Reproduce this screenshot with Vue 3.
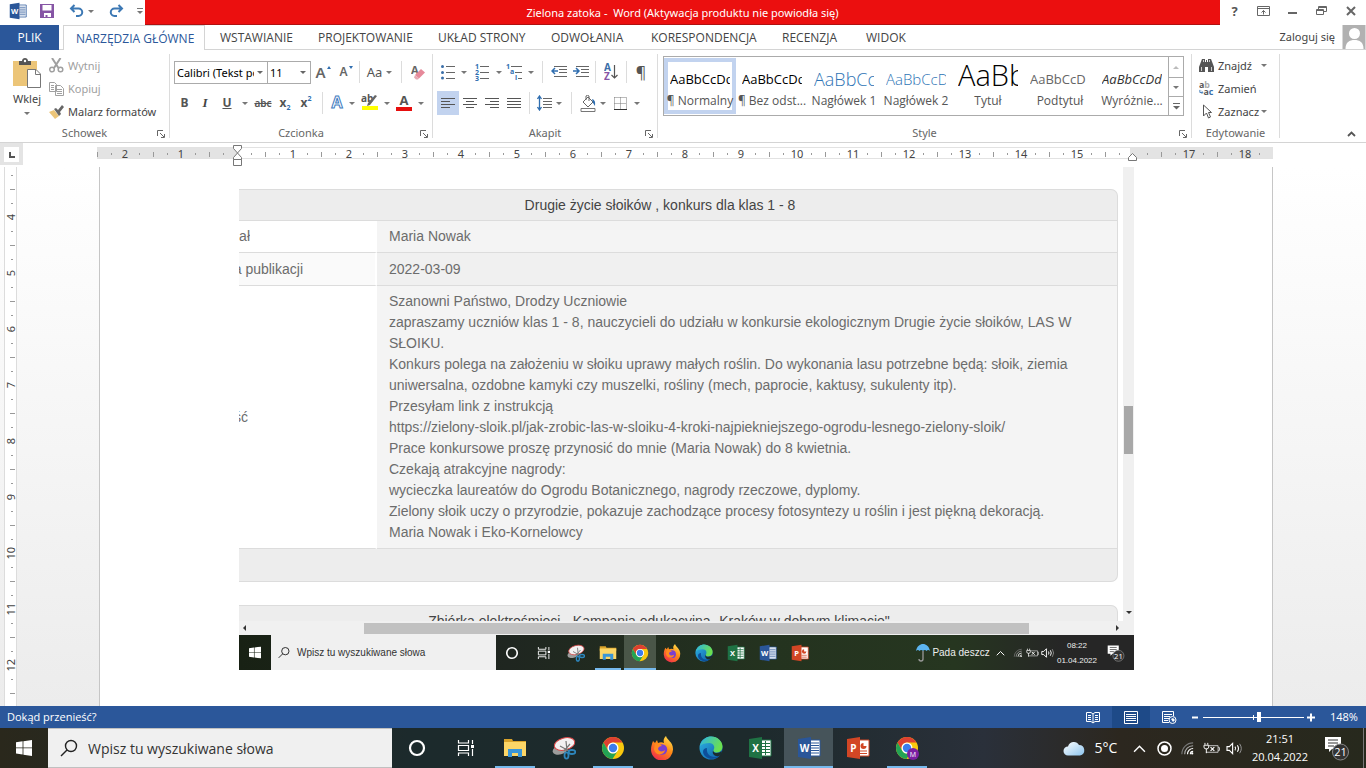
<script setup>
import { ref } from 'vue'

const tabs = [
  { name: 'WSTAWIANIE', cls: 't98' },
  { name: 'PROJEKTOWANIE', cls: 't120' },
  { name: 'UKŁAD STRONY', cls: 't113' },
  { name: 'ODWOŁANIA', cls: 't100' },
  { name: 'KORESPONDENCJA', cls: 't131' },
  { name: 'RECENZJA', cls: 't84' },
  { name: 'WIDOK', cls: 't67' },
]

const styles = [
  { preview: 'AaBbCcDd', label: '¶ Normalny', cls: 'p-normal', on: true },
  { preview: 'AaBbCcDd', label: '¶ Bez odst...', cls: 'p-normal' },
  { preview: 'AaBbCc', label: 'Nagłówek 1', cls: 'p-h1' },
  { preview: 'AaBbCcD', label: 'Nagłówek 2', cls: 'p-h2' },
  { preview: 'AaBb', label: 'Tytuł', cls: 'p-title' },
  { preview: 'AaBbCcD', label: 'Podtytuł', cls: 'p-sub' },
  { preview: 'AaBbCcDd', label: 'Wyróżnie...', cls: 'p-em' },
]

const ruler = [2, 1, '', 1, 2, 3, 4, 5, 6, 7, 8, 9, 10, 11, 12, 13, 14, 15, '', 17, 18]
const sideRuler = ['', 4, 5, 6, 7, 8, 9, 10, 11, 12, '']

const body = [
  'Szanowni Państwo, Drodzy Uczniowie',
  'zapraszamy uczniów klas 1 - 8, nauczycieli do udziału w konkursie ekologicznym Drugie życie słoików, LAS W',
  'SŁOIKU.',
  'Konkurs polega na założeniu w słoiku uprawy małych roślin. Do wykonania lasu potrzebne będą: słoik, ziemia',
  'uniwersalna, ozdobne kamyki czy muszelki, rośliny (mech, paprocie, kaktusy, sukulenty itp).',
  'Przesyłam link z instrukcją',
  'https://zielony-sloik.pl/jak-zrobic-las-w-sloiku-4-kroki-najpiekniejszego-ogrodu-lesnego-zielony-sloik/',
  'Prace konkursowe proszę przynosić do mnie (Maria Nowak) do 8 kwietnia.',
  'Czekają atrakcyjne nagrody:',
  'wycieczka laureatów do Ogrodu Botanicznego, nagrody rzeczowe, dyplomy.',
  'Zielony słoik uczy o przyrodzie, pokazuje zachodzące procesy fotosyntezy u roślin i jest piękną dekoracją.',
  'Maria Nowak i Eko-Kornelowcy',
]

const apps = [
  { icon: 'cortana', name: 'Cortana' },
  { icon: 'taskview', name: 'Widok zadań' },
  { icon: 'explorer', name: 'Eksplorator plików', run: true },
  { icon: 'snip', name: 'Narzędzie Wycinanie' },
  { icon: 'chrome', name: 'Chrome', run: true },
  { icon: 'firefox', name: 'Firefox' },
  { icon: 'edge', name: 'Edge' },
  { icon: 'excel', name: 'Excel' },
  { icon: 'word', name: 'Word', run: true, active: true },
  { icon: 'ppt', name: 'PowerPoint' },
  { icon: 'chromem', name: 'Chrome M', run: true },
]
const innerApps = [
  { icon: 'cortana' },
  { icon: 'taskview' },
  { icon: 'snip' },
  { icon: 'explorer', run: true },
  { icon: 'chrome', run: true, active: true },
  { icon: 'firefox' },
  { icon: 'edge' },
  { icon: 'excel' },
  { icon: 'word' },
  { icon: 'ppt' },
]

const zoom = ref(56)
const query = ref('')
</script>

<template>
  <div class="screen">
    <svg class="defs" aria-hidden="true">
      <defs>
        <linearGradient id="gEdge" x1="0" y1="0" x2="1" y2="1">
          <stop offset="0" stop-color="#2fb6e6" /><stop offset="1" stop-color="#0c59a4" />
        </linearGradient>
        <linearGradient id="gEdge2" x1="0" y1="0" x2="1" y2="0.4">
          <stop offset="0" stop-color="#2cb4e8" /><stop offset="1" stop-color="#6be04f" />
        </linearGradient>
        <linearGradient id="gFox" x1="0.8" y1="0" x2="0.2" y2="1">
          <stop offset="0" stop-color="#ffe14d" /><stop offset="0.45" stop-color="#ff8a16" /><stop offset="1" stop-color="#f0264f" />
        </linearGradient>
        <linearGradient id="gCloud" x1="0" y1="0" x2="1" y2="1">
          <stop offset="0" stop-color="#ffffff" /><stop offset="1" stop-color="#8cc4ee" />
        </linearGradient>
      </defs>
      <symbol id="cortana" viewBox="0 0 24 24"><circle cx="12" cy="12" r="7" fill="none" stroke="#fff" stroke-width="2.2" /></symbol>
      <symbol id="taskview" viewBox="0 0 24 24">
        <path d="M4.500 4v3h10V4M4.500 20v-3h10v3M4.500 9.500h10v5h-10zM18.500 4v4M18.500 13v7" fill="none" stroke="#fff" stroke-width="1.200" />
        <path d="M17 9h3v3h-3z" fill="#fff" />
      </symbol>
      <symbol id="explorer" viewBox="0 0 24 24">
        <path d="M1 3h8l1 2h13v4H1z" fill="#d9a32b" /><path d="M1 6h22v14H1z" fill="#fcd667" />
        <path d="M5 13h14v8h-4v-4H9v4H5z" fill="#3a96d8" />
      </symbol>
      <symbol id="snip" viewBox="0 0 24 24">
        <ellipse cx="8" cy="14" rx="7.500" ry="4.500" transform="rotate(-15 8 14)" fill="#9c9c9c" />
        <ellipse cx="12.500" cy="8" rx="10.500" ry="6" transform="rotate(-15 12.500 8)" fill="#f3f1f2" stroke="#d84848" />
        <path d="M14 5l1 10M8 10l9 5M18 8l-6 7" stroke="#777" stroke-width="1.200" />
        <g fill="none" stroke="#2d86bd" stroke-width="1.800"><ellipse cx="14.500" cy="19.500" rx="2" ry="3.200" /><ellipse cx="20" cy="16" rx="3.400" ry="2" /></g>
      </symbol>
      <symbol id="chrome" viewBox="0 0 24 24">
        <circle cx="12" cy="12" r="11" fill="#f9c80e" />
        <path d="M2.500 6.500A11 11 0 0 1 21.500 6.500H12a5.500 5.500 0 0 0-4.800 8.200z" fill="#dd4031" />
        <path d="M2.500 6.500A11 11 0 0 0 11.500 23L16.800 14.700a5.500 5.500 0 0 1-9.600 0z" fill="#23a355" />
        <circle cx="12" cy="12" r="5.500" fill="#fff" /><circle cx="12" cy="12" r="4.200" fill="#3b7ded" />
      </symbol>
      <symbol id="firefox" viewBox="0 0 24 24">
        <path d="M3 5l2 2 2-3 1 3c2-1 4-1 6 0-1-3 0-5 2-7 1 4 7 6 7 13a11 11 0 0 1-22 1C1 10 2 8 3 5z" fill="url(#gFox)" />
        <circle cx="12" cy="13.500" r="5.200" fill="#7a3fd0" />
        <path d="M5 8c3-1 5 0 7 2-2 0-4 1-4 3 1 3 5 3 7 1-1 6-10 6-11-1z" fill="#ff8a20" />
      </symbol>
      <symbol id="edge" viewBox="0 0 24 24">
        <circle cx="12" cy="12" r="11.500" fill="url(#gEdge)" />
        <path d="M1 10C3 3 8 .5 12 .5c7 0 11.500 5 11.500 10 0 4-3 6-6 6-2 0-4-1-3-2.500 2-3 0-7-4-7-4 0-8 1-9.500 3z" fill="url(#gEdge2)" />
        <path d="M8 12c-1 6 4 11 12 8-5 5-15 3-16-4 0-3 2-4 4-4z" fill="#0d4f9a" />
        <path d="M14.500 13.500c-1 2 1 3.500 3 3.500 2.500 0 4-1 5-2l.5 3-3 2c-4 1-8-2-5.500-6.500z" fill="#1b2c2f" />
      </symbol>
      <symbol id="excel" viewBox="0 0 24 24">
        <path d="M12 4h11v16H12z" fill="#fff" stroke="#1f7244" /><path d="M13 7.500h9M13 10.500h9M13 13.500h9M13 16.500h9M17.500 5v14" stroke="#1f7244" />
        <path d="M1 3l13-2v22L1 21z" fill="#1f7244" /><text x="7.500" y="16" class="off">X</text>
      </symbol>
      <symbol id="word" viewBox="0 0 24 24">
        <path d="M12 4h11v16H12z" fill="#fff" stroke="#2a5699" /><path d="M14 7h8M14 9.500h8M14 12h8M14 14.500h8M14 17h8" stroke="#2a5699" />
        <path d="M1 3l13-2v22L1 21z" fill="#2a5699" /><text x="7.500" y="16" class="off">W</text>
      </symbol>
      <symbol id="ppt" viewBox="0 0 24 24">
        <path d="M12 4h11v16H12z" fill="#fff" stroke="#d24625" /><path d="M14 15h7M14 17.500h7" stroke="#d24625" /><circle cx="17.500" cy="10" r="3" fill="#d24625" /><path d="M17.500 10V6h4v4z" fill="#fff" />
        <path d="M1 3l13-2v22L1 21z" fill="#d24625" /><text x="7.500" y="16" class="off">P</text>
      </symbol>
      <symbol id="chromem" viewBox="0 0 24 24">
        <use href="#chrome" /><circle cx="18" cy="18" r="6" fill="#7b1fa2" /><text x="18" y="20.500" class="badge">M</text>
      </symbol>
      <symbol id="start" viewBox="0 0 16 16"><path d="M0 2.300l6.600-1v6.200H0zM7.400 1.200L16 0v7.500H7.400zM0 8.300h6.600v6.300l-6.600-1zM7.400 8.300H16V16l-8.600-1.200z" fill="#fff" /></symbol>
      <symbol id="search" viewBox="0 0 18 18"><circle cx="11" cy="7" r="5.500" fill="none" stroke="#222" stroke-width="1.400" /><path d="M7 11l-6 6" stroke="#222" stroke-width="1.400" /></symbol>
      <symbol id="wifi" viewBox="0 0 16 16">
        <g fill="none" stroke-width="1.200"><path d="M2 14A12 12 0 0 1 14 2" stroke="#777" /><path d="M5 14a9 9 0 0 1 9-9" stroke="#aaa" /><path d="M8 14a6 6 0 0 1 6-6" stroke="#fff" /><path d="M11 14a3 3 0 0 1 3-3" stroke="#fff" /></g><circle cx="13" cy="13.200" r="1.200" fill="#fff" />
      </symbol>
      <symbol id="batt" viewBox="0 0 18 16">
        <path d="M6 5h10v7H3M16 7h1.500v3H16" fill="none" stroke="#ccc" /><path d="M2 2v2M5 2v2M1 4.500h5v2a2.500 2 0 0 1-5 0zM3.500 8v5" fill="none" stroke="#fff" /><path d="M8 6.500l4 4M12 6.500l-4 4" stroke="#fff" stroke-width="1.300" />
      </symbol>
      <symbol id="vol" viewBox="0 0 18 16">
        <path d="M1 6h2.500L7 2.500v11L3.500 10H1z" fill="none" stroke="#fff" stroke-width="1.200" /><path d="M9.500 6q1.500 2 0 4M12 4.500q2.500 3.500 0 7" fill="none" stroke="#fff" stroke-width="1.200" /><path d="M14.500 3q3.500 5 0 10" fill="none" stroke="#999" />
      </symbol>
      <symbol id="up" viewBox="0 0 12 12"><path d="M1 9l5-5 5 5" fill="none" stroke="#fff" stroke-width="1.300" /></symbol>
      <symbol id="note" viewBox="0 0 26 26">
        <path d="M1 2h16v12H8l-3 3v-3H1z" fill="#fff" /><path d="M4 5h10M4 8h10M4 11h6" stroke="#333" /><circle cx="16.500" cy="17" r="8" fill="#333" stroke="#888" /><text x="16.500" y="21" class="num">21</text>
      </symbol>
      <symbol id="launch" viewBox="0 0 8 8"><path d="M.5 6V.5H6M3 3l4 4M7.500 4v3.500H4" fill="none" stroke="#666" /></symbol>
    </svg>

    <header class="titlebar">
      <div class="quick">
        <svg class="i18"><use href="#word" /></svg>
        <button aria-label="Zapisz"><svg width="14" height="14" viewBox="0 0 14 14"><path d="M0 0h14v14H0z" fill="#8655a5" /><path d="M2.500 1h9v5.500h-9zM4 9h7v4H7.500v-2h-2v2H4z" fill="#fff" /></svg></button>
        <button aria-label="Cofnij"><svg width="15" height="14" viewBox="0 0 15 14"><path d="M5.500 1L2 4.500 5.500 8M2 4.500h7.500a3.700 3.700 0 0 1 0 7.500H7" fill="none" stroke="#3c78b4" stroke-width="2" /></svg></button>
        <i class="caret"></i>
        <button aria-label="Ponów"><svg width="15" height="14" viewBox="0 0 15 14"><path d="M9.500 1L13 4.500 9.500 8M13 4.500H5.500a3.700 3.700 0 0 0 0 7.500H8" fill="none" stroke="#3c78b4" stroke-width="2" /></svg></button>
        <button aria-label="Dostosuj"><svg width="6" height="7" viewBox="0 0 6 7"><path d="M0 .5h6" stroke="#777" /><path d="M0 3h6L3 6z" fill="#777" /></svg></button>
      </div>
      <h1 class="caption">Zielona zatoka -&nbsp; Word (Aktywacja produktu nie powiodła się)</h1>
      <div class="wincontrols">
        <button aria-label="Pomoc" class="help">?</button>
        <button aria-label="Opcje wstążki"><svg width="13" height="10" viewBox="0 0 13 10"><path d="M.5.5h12v9H.5zM.5 2.500h12M6.500 8.500v-4M4.500 6.500l2-2 2 2" fill="none" stroke="#666" /></svg></button>
        <button aria-label="Minimalizuj"><svg width="10" height="10" viewBox="0 0 10 10"><path d="M0 7h9" stroke="#666" stroke-width="2" /></svg></button>
        <button aria-label="Przywróć"><svg width="11" height="10" viewBox="0 0 11 10"><path d="M.5 3.500h7v5h-7zM.5 4.500h7M2.500 3V.5h8v5H8M2.500 1.500h8" fill="none" stroke="#666" /></svg></button>
        <button aria-label="Zamknij"><svg width="10" height="10" viewBox="0 0 10 10"><path d="M1 1l8 8M9 1L1 9" stroke="#666" stroke-width="2" /></svg></button>
      </div>
    </header>

    <nav class="tabs">
      <button class="file">PLIK</button>
      <button class="active">NARZĘDZIA GŁÓWNE</button>
      <button v-for="t in tabs" :key="t.name" :class="t.cls">{{ t.name }}</button>
      <a href="#" class="login">Zaloguj się</a>
      <svg class="avatar" width="24" height="24" viewBox="0 0 23 24"><path d="M0 0h23v24H0z" fill="#b1b1b1" /><circle cx="12" cy="8.500" r="5.500" fill="#fff" /><path d="M3 24c0-7 4-9 9-9s9 2 9 9z" fill="#fff" /></svg>
    </nav>

    <section class="ribbon">
      <div class="group g-clip">
        <div class="gbody clip">
          <button class="paste">
            <svg width="28" height="30" viewBox="0 0 28 30"><path d="M0 3h24v25H0z" fill="#ecc578" /><path d="M6 7V3h3c0-4 6-4 6 0h3v4z" fill="#555" /><circle cx="12" cy="3" r="1.200" fill="#fff" /><path d="M14.500 11.500H23l4.500 4.500v13.500h-13z" fill="#fff" stroke="#777" /><path d="M22.500 12v4.500H27" fill="none" stroke="#777" /></svg>
            <span>Wklej</span><i class="caret"></i>
          </button>
          <div class="stack">
            <button class="dim"><svg width="15" height="15" viewBox="0 0 15 15"><g fill="none" stroke="#a0a0a0" stroke-width="1.500"><circle cx="3" cy="11.500" r="2.300" /><circle cx="11.500" cy="11.500" r="2.300" /></g><path d="M3 0l6.500 10M11.500 0L5 10" stroke="#a0a0a0" stroke-width="2" /></svg>Wytnij</button>
            <button class="dim"><svg width="15" height="15" viewBox="0 0 15 15"><path d="M.5 1.500h5l2 2v7h-7zM6.500 4.500h5l3 3v7h-8z" fill="#fff" stroke="#a0a0a0" /><path d="M2 4.500h3M2 6.500h3M2 8.500h3M8 8.500h5M8 10.500h5M8 12.500h5" stroke="#a0a0a0" /></svg>Kopiuj</button>
            <button><svg width="15" height="14" viewBox="0 0 15 14"><path d="M0 7l5-2 5 6-4 3z" fill="#ecc578" /><path d="M5 4l2-1 2 2 4-5 2 2-4 5 1 2-2 2z" fill="#666" /></svg>Malarz formatów</button>
          </div>
        </div>
        <footer>Schowek<svg class="launch"><use href="#launch" /></svg></footer>
      </div>

      <div class="group g-font">
        <div class="gbody rows">
          <div class="row font1">
            <label class="combo"><select aria-label="Czcionka"><option>Calibri (Tekst podstawowy)</option></select></label>
            <label class="combo second"><select aria-label="Rozmiar"><option>11</option></select></label>
            <button class="big">A<sup class="tri up"></sup></button>
            <button class="mid">A<sup class="tri down"></sup></button>
            <i class="vsep"></i>
            <button class="aa">Aa<i class="caret"></i></button>
            <i class="vsep"></i>
            <button aria-label="Wyczyść"><svg width="15" height="16" viewBox="0 0 15 16"><text x="0" y="10" class="t11">A</text><path d="M4 11l6-6 4 3.500-6 6z" fill="#e6899a" /><path d="M4 11l4 3.500-1 1H5l-2-2z" fill="#e6a9b4" /></svg></button>
          </div>
          <div class="row font2">
            <button class="b">B</button><button class="it">I</button><button class="un">U</button><i class="caret"></i>
            <button class="st">abc</button>
            <button class="xx">x<sub>2</sub></button><button class="xx">x<sup>2</sup></button>
            <i class="vsep"></i>
            <button aria-label="Efekty"><svg width="16" height="18" viewBox="0 0 16 18"><text x="8" y="14" class="glow">A</text></svg></button><i class="caret"></i>
            <button aria-label="Wyróżnienie"><svg width="18" height="18" viewBox="0 0 18 18"><text x="0" y="8" class="t9">ab</text><path d="M14 1l2 1-7 9-3 1 1-3z" fill="#666" /><path d="M1 12h16v4H1z" fill="#ff0" /></svg></button><i class="caret"></i>
            <button aria-label="Kolor"><svg width="16" height="18" viewBox="0 0 16 18"><text x="8" y="11" class="t13">A</text><path d="M0 13h16v4H0z" fill="#e60e0e" /></svg></button><i class="caret"></i>
          </div>
        </div>
        <footer>Czcionka<svg class="launch"><use href="#launch" /></svg></footer>
      </div>

      <div class="group g-para">
        <div class="gbody rows">
          <div class="row para1">
            <button aria-label="Punktory"><svg width="14" height="16" viewBox="0 0 14 16"><path d="M5 2.500h9M5 8.500h9M5 14.500h9" stroke="#666" /><g fill="#3a6ea8"><circle cx="1.500" cy="2.500" r="1.500" /><circle cx="1.500" cy="8.500" r="1.500" /><circle cx="1.500" cy="14" r="1.500" /></g></svg></button><i class="caret"></i>
            <button aria-label="Numerowanie"><svg width="14" height="17" viewBox="0 0 14 17"><path d="M5 2.500h9M5 8.500h9M5 14.500h9" stroke="#666" /><text x="0" y="5" class="t6">1</text><text x="0" y="11" class="t6">2</text><text x="0" y="17" class="t6">3</text></svg></button><i class="caret"></i>
            <button aria-label="Lista wielopoziomowa"><svg width="17" height="16" viewBox="0 0 17 16"><path d="M5 2.500h11M9 8.500h7M12 14.500h4" stroke="#666" /><text x="0" y="5" class="t6">1</text><text x="4" y="10" class="t6">a</text><text x="9" y="16" class="t6">i</text></svg></button><i class="caret"></i>
            <i class="vsep"></i>
            <button aria-label="Zmniejsz wcięcie"><svg width="16" height="12" viewBox="0 0 16 12"><path d="M3 .5h13M8 3.500h8M8 6.500h8M3 10.500h13" stroke="#666" /><path d="M7 5H1M4 2L1 5l3 3" fill="none" stroke="#2f6eb0" stroke-width="1.500" /></svg></button>
            <button aria-label="Zwiększ wcięcie"><svg width="16" height="12" viewBox="0 0 16 12"><path d="M3 .5h13M8 3.500h8M8 6.500h8M3 10.500h13" stroke="#666" /><path d="M0 5h6M3 2l3 3-3 3" fill="none" stroke="#2f6eb0" stroke-width="1.500" /></svg></button>
            <i class="vsep"></i>
            <button aria-label="Sortuj"><svg width="14" height="18" viewBox="0 0 14 18"><text x="0" y="8" class="t9 blue">A</text><text x="0" y="17" class="t9 purple">Z</text><path d="M10.500 2v13M7.500 12l3 3 3-3" fill="none" stroke="#555" stroke-width="1.200" /></svg></button>
            <i class="vsep"></i>
            <button class="pil">¶</button>
          </div>
          <div class="row para2">
            <button class="on" aria-label="Do lewej"><svg width="14" height="12" viewBox="0 0 14 12"><path d="M0 1.500h14M0 4.500h9M0 7.500h14M0 10.500h9" stroke="#555" /></svg></button>
            <button aria-label="Do środka"><svg width="14" height="12" viewBox="0 0 14 12"><path d="M0 1.500h14M3 4.500h8M0 7.500h14M3 10.500h8" stroke="#555" /></svg></button>
            <button aria-label="Do prawej"><svg width="14" height="12" viewBox="0 0 14 12"><path d="M0 1.500h14M5 4.500h9M0 7.500h14M5 10.500h9" stroke="#555" /></svg></button>
            <button aria-label="Wyjustuj"><svg width="14" height="12" viewBox="0 0 14 12"><path d="M0 1.500h14M0 4.500h14M0 7.500h14M0 10.500h14" stroke="#555" /></svg></button>
            <i class="vsep"></i>
            <button aria-label="Odstępy"><svg width="15" height="16" viewBox="0 0 15 16"><path d="M6 3.500h9M6 6.500h9M6 9.500h9M6 12.500h9" stroke="#666" /><path d="M2.500 1v14M.5 4l2-3 2 3M.5 12l2 3 2-3" fill="none" stroke="#2f6eb0" stroke-width="1.300" /></svg></button><i class="caret"></i>
            <i class="vsep"></i>
            <button aria-label="Cieniowanie"><svg width="17" height="17" viewBox="0 0 17 17"><path d="M3 7l5-5 5 5-5 5zM6 5V1q1.500-1.500 3 0v5" fill="#fff" stroke="#666" /><path d="M12 4q4 1 3 7l-2-3z" fill="#2f6eb0" /><path d="M1 13.500h14v3H1z" fill="#fff" stroke="#777" /></svg></button><i class="caret"></i>
            <button aria-label="Obramowanie"><svg width="13" height="13" viewBox="0 0 13 13"><path d="M.5.5h12v12M.5.5v12M6.500.5v12M.5 6.500h12" fill="none" stroke="#777" stroke-dasharray="1 1" /><path d="M0 12.500h13" stroke="#333" /></svg></button><i class="caret"></i>
          </div>
        </div>
        <footer>Akapit<svg class="launch"><use href="#launch" /></svg></footer>
      </div>

      <div class="group g-style">
        <div class="gbody">
          <div class="gallery">
            <button v-for="s in styles" :key="s.label" class="style" :class="{ sel: s.on }">
              <span class="preview" :class="s.cls">{{ s.preview }}</span>
              <span class="sname">{{ s.label }}</span>
            </button>
            <div class="gscroll">
              <button aria-label="W górę"><i class="caret flip"></i></button>
              <button aria-label="W dół"><i class="caret"></i></button>
              <button aria-label="Więcej"><svg width="7" height="7" viewBox="0 0 7 7"><path d="M0 .5h7" stroke="#666" /><path d="M0 3h7L3.500 6.500z" fill="#666" /></svg></button>
            </div>
          </div>
        </div>
        <footer>Style<svg class="launch"><use href="#launch" /></svg></footer>
      </div>

      <div class="group g-edit">
        <div class="gbody stack">
          <button><svg width="15" height="13" viewBox="0 0 15 13"><path d="M3 0h3v3h1V1h1v2h1V0h3l3 8v5H9V8H6v5H0V8z" fill="#555" /><path d="M2.500 8v4M12.500 8v4M4.500 1v2M10.500 1v2" stroke="#ccc" /></svg>Znajdź<i class="caret far"></i></button>
          <button><svg width="17" height="16" viewBox="0 0 17 16"><text x="0" y="7" class="t9">a</text><text x="6" y="7" class="t9 lite">b</text><text x="5" y="15" class="t9">a</text><text x="11" y="15" class="t9 blue">c</text><path d="M1 9v3h3M3 10.500l1.500 1.500L3 13.500" fill="none" stroke="#2f6eb0" /></svg>Zamień</button>
          <button><svg width="15" height="15" viewBox="0 0 15 15"><path d="M4.500 1v11l3-3 2 5 2-1-2-4.500h3z" fill="#fff" stroke="#555" /></svg>Zaznacz<i class="caret near"></i></button>
        </div>
        <footer>Edytowanie</footer>
      </div>
      <button class="collapse" aria-label="Zwiń wstążkę"><svg width="9" height="6" viewBox="0 0 9 6"><path d="M1 5l3.500-3.500L8 5" fill="none" stroke="#555" stroke-width="1.800" /></svg></button>
    </section>

    <div class="rulerbar">
      <div class="tabsel"><svg width="15" height="15" viewBox="0 0 15 15"><path d="M0 0h15v15H0z" fill="#fff" /><path d="M6 5v5h5" fill="none" stroke="#555" stroke-width="2" /></svg></div>
      <div class="ruler">
        <span v-for="(n, i) in ruler" :key="i" class="cell">{{ n }}</span>
        <svg class="indent" width="11" height="22" viewBox="0 0 11 22"><path d="M1.500.5h8v3l-4 4.500 4 4.500v2h-8v-2L5.500 8l-4-4.500zM1.500 14.500h8v6h-8z" fill="#fff" stroke="#777" /></svg>
        <svg class="rindent" width="9" height="8" viewBox="0 0 9 8"><path d="M.5 7.500v-3l4-4 4 4v3z" fill="#fff" stroke="#777" /></svg>
      </div>
    </div>

    <main class="work">
      <div class="vruler"><div class="vtrack"><span v-for="(n, i) in sideRuler" :key="i" class="vcell"><b>{{ n }}</b></span></div></div>
      <article class="page">
        <div class="shot">
          <div class="view">
            <div class="content">
              <table>
                <thead><tr><th colspan="2">Drugie życie słoików , konkurs dla klas 1 - 8</th></tr></thead>
                <tbody>
                  <tr><td><span class="cut w11">Dodał</span></td><td>Maria Nowak</td></tr>
                  <tr class="alt"><td><span class="cut w64">Data publikacji</span></td><td>2022-03-09</td></tr>
                  <tr class="msg"><td><span class="cut w9">Treść</span></td><td><p v-for="l in body" :key="l">{{ l }}</p></td></tr>
                </tbody>
                <tfoot><tr><td colspan="2"></td></tr></tfoot>
              </table>
              <div class="next">Zbiórka elektrośmieci - Kampania edukacyjna „Kraków w dobrym klimacie"</div>
            </div>
            <div class="vbar"><i class="vthumb"></i><i class="caret dark"></i></div>
          </div>
          <div class="hbar"><i class="lt"></i><i class="hthumb"></i><i class="gt"></i></div>
          <div class="minibar">
            <span class="ministart"><svg width="12" height="15" viewBox="0 0 16 16"><use href="#start" /></svg></span>
            <span class="minisearch"><svg width="12" height="15" viewBox="0 0 18 18"><use href="#search" /></svg>Wpisz tu wyszukiwane słowa</span>
            <span v-for="a in innerApps" :key="a.icon" class="mapp" :class="{ run: a.run, active: a.active }"><svg width="18" height="20"><use :href="'#' + a.icon" /></svg></span>
            <div class="minitray">
              <svg width="14" height="19" viewBox="0 0 14 19"><path d="M0 8C1 3 4 1 7 1s6 2 7 7q-2-2-3.500 0Q9 6 7 8 5 6 3.500 8 2 6 0 8z" fill="#5cb4f0" /><path d="M7 8v8q0 2-2 2t-2-2" fill="none" stroke="#999" stroke-width="1.300" /></svg>
              <span>Pada deszcz</span>
              <svg width="9" height="12"><use href="#up" /></svg>
              <svg width="10" height="14"><use href="#wifi" /></svg>
              <svg width="13" height="14"><use href="#batt" /></svg>
              <svg width="14" height="14"><use href="#vol" /></svg>
              <span class="miniclock">08:22<br />01.04.2022</span>
              <svg width="18" height="22"><use href="#note" /></svg>
            </div>
          </div>
        </div>
      </article>
    </main>

    <footer class="status">
      <span class="msgtext">Dokąd przenieść?</span>
      <button aria-label="Tryb odczytu"><svg width="14" height="13" viewBox="0 0 14 13"><path d="M.5 1.500H5L7 3l2-1.500h4.500v9H9L7 12l-2-1.500H.5zM7 3v9M2 4.500h3M2 6.500h3M2 8.500h3M9 4.500h3M9 6.500h3M9 8.500h3" fill="none" stroke="#fff" /></svg></button>
      <button class="cur" aria-label="Układ wydruku"><svg width="14" height="13" viewBox="0 0 14 13"><path d="M.5.5h13v12H.5zM2 3.500h10M2 5.500h10M2 7.500h10M2 9.500h10" fill="none" stroke="#fff" /></svg></button>
      <button aria-label="Układ sieci Web"><svg width="15" height="13" viewBox="0 0 15 13"><path d="M11.500 5V.5H.5v11H7M2 3.500h8M2 5.500h6M2 7.500h5M2 9.500h4" fill="none" stroke="#fff" /><circle cx="10.500" cy="9" r="3.500" fill="#2b579a" stroke="#fff" /><path d="M9 8l2-1 2 2-2 2z" fill="#fff" /></svg></button>
      <button class="sign" aria-label="Pomniejsz"><svg width="7" height="9" viewBox="0 0 7 9"><path d="M0 4.500h6" stroke="#fff" stroke-width="2" /></svg></button>
      <input v-model="zoom" class="zoom" type="range" min="0" max="100" aria-label="Powiększenie" />
      <button class="sign" aria-label="Powiększ"><svg width="9" height="9" viewBox="0 0 9 9"><path d="M0 4.500h8M4 .5v8" stroke="#fff" stroke-width="2" /></svg></button>
      <span class="pct">148%</span>
    </footer>

    <footer class="taskbar">
      <button class="start" aria-label="Start"><svg width="16" height="16"><use href="#start" /></svg></button>
      <label class="searchbox"><svg width="18" height="18"><use href="#search" /></svg><input v-model="query" type="text" placeholder="Wpisz tu wyszukiwane słowa" aria-label="Wyszukaj" /></label>
      <button v-for="a in apps" :key="a.icon" class="app" :class="{ run: a.run, active: a.active }" :aria-label="a.name"><svg width="24" height="24"><use :href="'#' + a.icon" /></svg></button>
      <div class="tray">
        <svg width="22" height="16" viewBox="0 0 22 16"><path d="M5 15.500a4.500 4.500 0 0 1 0-9A6 6 0 0 1 16 5a5.300 5.300 0 0 1 1 10.500z" fill="url(#gCloud)" /></svg>
        <span class="temp">5°C</span>
        <svg width="13" height="13"><use href="#up" /></svg>
        <svg width="15" height="15" viewBox="0 0 15 15"><circle cx="7.500" cy="7.500" r="6.500" fill="none" stroke="#fff" stroke-width="1.500" /><circle cx="7.500" cy="7.500" r="3.500" fill="#fff" /></svg>
        <svg width="15" height="15"><use href="#wifi" /></svg>
        <svg width="17" height="15"><use href="#batt" /></svg>
        <svg width="17" height="15"><use href="#vol" /></svg>
        <span class="clock">21:51<br />20.04.2022</span>
        <svg width="26" height="26"><use href="#note" /></svg>
        <i class="peek"></i>
      </div>
    </footer>
  </div>
</template>

<style>
body { overflow: hidden; }
</style>

<style scoped>
* { box-sizing: border-box; }
.screen { display: flex; flex-direction: column; height: 100vh; background: #fff; color: #444; font: 11px/16px "Noto Sans", "Open Sans", sans-serif; white-space: nowrap; overflow: hidden; }
.defs { position: absolute; width: 0; height: 0; }
button { display: flex; align-items: center; justify-content: center; margin: 0; padding: 0; border: 0; background: none; font: inherit; color: inherit; }
svg { flex: none; display: block; }
i { font-style: normal; }
.caret { flex: none; justify-self: center; width: 0; height: 0; border: 3px solid transparent; border-top-color: #777; border-bottom-width: 0; }
.flip { border-top-width: 0; border-bottom: 3px solid #bbb; }
.off { font: bold 10px "Open Sans", sans-serif; fill: #fff; text-anchor: middle; }
.badge { font: 7px "Open Sans", sans-serif; fill: #fff; text-anchor: middle; }
.num { font: 11px "Open Sans", sans-serif; fill: #fff; text-anchor: middle; }
.t11 { font: bold 11px "Open Sans", sans-serif; fill: #666; }
.t13 { font: bold 13px "Open Sans", sans-serif; fill: #555; text-anchor: middle; }
.t9 { font: bold 10px "Open Sans", sans-serif; fill: #555; }
.t6 { font: bold 7px "Open Sans", sans-serif; fill: #2f6eb0; }
.t9.blue { fill: #3a6ea8; }
.t9.purple { fill: #8655a5; }
.t9.lite { fill: #aaa; }
.glow { font: bold 16px "Open Sans", sans-serif; fill: #fff; stroke: #3f7cc0; text-anchor: middle; }

.titlebar { display: flex; height: 25px; flex: none; }
.quick { width: 145px; display: grid; grid-template-columns: 20px 38px 20px 10px 40px 8px; padding-left: 8px; align-items: center; justify-items: center; padding-bottom: 3px; }
.i18 { width: 18px; height: 18px; }
.caption { flex: 1; margin: 0; background: #eb0f0f; border-bottom: 1px solid #b01010; color: #fff; font-size: 11px; font-weight: 400; line-height: 26px; text-align: center; }
.wincontrols { width: 146px; display: grid; grid-template-columns: repeat(5, 29px); padding-bottom: 3px; }
.help { font-weight: 700; font-size: 13px; color: #555; }

.tabs { display: flex; height: 25px; flex: none; border-bottom: 1px solid #d4d4d4; }
.tabs > button { justify-content: flex-start; padding-left: 15px; height: 25px; font: 12px "Open Sans", sans-serif; }
.tabs > .file { width: 59px; justify-content: center; padding: 0; background: #2b579a; color: #fff; margin-right: 4px; }
.tabs > .active { width: 142px; padding-left: 12px; color: #2b579a; background: #fff; border: 1px solid #d4d4d4; border-bottom: 0; }
.t98 { width: 98px; } .t120 { width: 120px; } .t113 { width: 113px; } .t100 { width: 100px; } .t131 { width: 131px; } .t84 { width: 84px; } .t67 { width: 67px; }
.login { margin-left: auto; padding-right: 7px; line-height: 24px; color: #444; text-decoration: none; }

.ribbon { display: flex; height: 93px; flex: none; border-bottom: 1px solid #d4d4d4; padding: 4px 0; }
.group { display: flex; flex-direction: column; border-right: 1px solid #dcdcdc; }
.gbody { flex: 1; }
.group > footer { display: flex; align-items: center; justify-content: center; height: 10px; color: #666; position: relative; }
.launch { position: absolute; right: 4px; top: 2px; width: 8px; height: 8px; }
.g-clip { width: 170px; } .g-font { width: 263px; } .g-para { width: 225px; } .g-style { width: 534px; } .g-edit { width: 88px; }
.clip { display: flex; }
.paste { flex-direction: column; justify-content: flex-start; width: 49px; padding: 4px 0 0 5px; }
.paste span { margin: 3px 0 5px; }
.stack button { height: 23px; gap: 4px; justify-content: flex-start; }
.g-edit .stack { padding-left: 7px; }
.g-edit .stack svg { width: 15px; }
.far { margin-left: 5px; }
.near { margin-left: -2px; }
.dim { color: #a0a0a0; }
.rows { display: flex; flex-direction: column; gap: 7px; padding: 6px 0 0 4px; }
.row { display: grid; height: 24px; align-items: center; }
.row button { height: 24px; }
.font1 { grid-template-columns: 94px 43px 24px 22px 4px 37px 7px 26px; }
.font2 { grid-template-columns: 21px 20px 24px 12px 24px 20px 22px 10px 20px 10px 25px 10px 24px 10px; }
.para1 { grid-template-columns: 21px 12px 24px 9px 22px 12px 11px 21px 23px 7px 24px 6px 24px; }
.para2 { grid-template-columns: 22px 22px 22px 22px 9px 20px 10px 14px 20px 10px 24px 10px; }
.vsep { justify-self: center; width: 1px; height: 22px; background: #dcdcdc; }
.combo { position: relative; display: block; height: 23px; border: 1px solid #ababab; padding-right: 13px; }
.combo.second { border-left: 0; }
.combo::after { content: ""; position: absolute; right: 4px; top: 9px; border: 3px solid transparent; border-top-color: #666; border-bottom-width: 0; }
.combo select { width: 100%; height: 21px; border: 0; appearance: none; background: #fff; padding: 0 0 0 2px; font: 11px "Noto Sans", sans-serif; color: #000; overflow: hidden; text-overflow: clip; }
.big { font-size: 15px; font-weight: 600; color: #666; }
.mid { font-size: 12px; font-weight: 600; color: #666; }
.tri { border: 2px solid transparent; margin: 0 0 9px 1px; }
.tri.up { border-top-width: 0; border-bottom: 3px solid #2f6eb0; }
.tri.down { border-bottom-width: 0; border-top: 3px solid #2f6eb0; }
.aa { font-size: 13px; color: #555; gap: 4px; }
.b, .un { font-weight: 700; font-size: 12px; color: #555; }
.un { text-decoration: underline; }
.it { font: italic 600 13px "Liberation Serif", serif; }
.st { font-size: 10px; font-weight: 600; text-decoration: line-through; color: #555; }
.xx { font-weight: 700; font-size: 12px; color: #555; }
.xx sub, .xx sup { font-size: 7px; color: #2f6eb0; line-height: 7px; }
.xx sub { margin-top: 9px; } .xx sup { margin-bottom: 9px; }
.pil { font-size: 16px; color: #555; }
.on { background: #c2d3ef; }
.g-style .gbody { padding: 2px 0 0 5px; }
.gallery { display: flex; width: 521px; height: 60px; border: 1px solid #ababab; }
.style { width: 72px; height: 56px; margin-top: 1px; flex-direction: column; justify-content: flex-start; border: 4px solid transparent; }
.sel { border-color: #c2d3ef; }
.preview { width: 60px; height: 31px; line-height: 34px; overflow: hidden; text-align: left; color: #000; font-family: "Open Sans", sans-serif; font-size: 13px; }
.sname { line-height: 19px; color: #555; margin: 0 -4px; font-size: 12px; font-family: "Open Sans", sans-serif; }
.p-h1 { font-size: 18px; font-weight: 300; color: #2e74b5; }
.p-h2 { font-size: 15px; font-weight: 300; color: #2e74b5; }
.p-title { font-size: 29px; font-weight: 300; line-height: 26px; }
.p-sub { font-size: 13px; color: #666; }
.p-em { font-style: italic; color: #333; }
.gscroll { display: grid; grid-template-rows: 20px 19px 19px; width: 15px; border-left: 1px solid #ababab; }
.gscroll button + button { border-top: 1px solid #ababab; }
.collapse { margin: auto 10px 1px auto; }

.rulerbar { display: flex; height: 24px; flex: none; background: #fff; }
.tabsel { width: 23px; height: 22px; background: #e4e4e4; padding: 4px; margin-right: 74px; }
.ruler { position: relative; flex: 1; margin: 4px 93px 0 0; height: 12px; display: grid; grid-template-columns: repeat(21, 1fr); border: solid #e2e2e2; border-width: 1px 0; background: linear-gradient(to right, #e3e3e3 141px, #fff 141px calc(100% - 143px), #e3e3e3 calc(100% - 143px)); }
.cell { text-align: center; line-height: 11px; font-size: 11px; color: #444; background: linear-gradient(#999, #999) 0 4px / 1px 5px no-repeat, linear-gradient(#999, #999) 14px 5px / 1px 2px no-repeat, linear-gradient(#999, #999) 42px 5px / 1px 2px no-repeat; }
.indent { position: absolute; left: 135px; top: -3px; }
.rindent { position: absolute; right: 136px; top: 5px; }

.work { flex: 1; min-height: 0; display: flex; background: linear-gradient(#fff, #ececec); overflow: hidden; }
.vruler { width: 99px; padding-left: 4px; overflow: hidden; }
.vtrack { width: 13px; margin-top: -34px; border: solid #dcdcdc; border-width: 0 1px; background: #fff; }
.vcell { display: flex; align-items: center; justify-content: center; height: 56px; background: linear-gradient(#999, #999) 5px 0 / 5px 1px no-repeat, linear-gradient(#999, #999) 6px 14px / 2px 1px no-repeat, linear-gradient(#999, #999) 6px 42px / 2px 1px no-repeat; }
.vcell b { writing-mode: vertical-rl; transform: rotate(180deg); font-weight: 400; font-size: 11px; line-height: 11px; }
.page { flex: 1; min-width: 0; margin-right: 93px; background: #fff; border: solid #c6c6c6; border-width: 0 1px; padding: 0 138px 0 139px; }
.shot { overflow: hidden; }
.view { display: flex; height: 454px; }
.content { flex: 1; min-width: 0; overflow: hidden; padding: 22px 5px 0 0; font: 14px/21px "Liberation Sans", sans-serif; color: #6c6c6c; }
table { display: block; width: 100%; }
thead, tbody, tfoot { display: block; }
thead tr, tfoot tr { display: grid; }
th { display: flex; align-items: center; justify-content: center; height: 32px; padding: 0 36px 0 0; background: #ededed; border: solid #dcdcdc; border-width: 1px 1px 1px 0; border-radius: 0 7px 0 0; color: #444; font-weight: 400; }
td { padding: 0; border-bottom: 1px solid #dcdcdc; background: #f4f4f4; }
tbody tr { display: grid; grid-template-columns: 138px 1fr; }
tbody td { display: flex; flex-direction: column; justify-content: center; min-height: 32px; }
tbody td:first-child { background: #fff; border-right: 2px solid #fff; }
tbody td:last-child { padding-left: 12px; border-right: 1px solid #dcdcdc; }
tbody .alt td { background: #f0f0f0; min-height: 33px; }
tbody .alt td:first-child { background: #fafafa; }
tbody .msg td { padding-top: 5px; padding-bottom: 5px; }
tfoot td { height: 33px; background: #ededed; border-right: 1px solid #dcdcdc; border-radius: 0 0 7px 0; }
p { margin: 0; }
.cut { display: flex; justify-content: flex-end; overflow: hidden; }
.w11 { width: 11px; } .w64 { width: 64px; } .w9 { width: 9px; }
.next { margin-top: 23px; height: 30px; padding: 5px 38px 0 0; text-align: center; background: #ededed; border: solid #dcdcdc; border-width: 1px 1px 0 0; border-radius: 0 7px 0 0; color: #444; }
.vbar { width: 11px; background: #f0f0f0; display: flex; flex-direction: column; align-items: center; padding-bottom: 7px; }
.vthumb { width: 9px; height: 48px; margin: 239px 0 auto; background: #a8a8a8; }
.dark { border-top-color: #333; }
.hbar { height: 14px; background: #f0f0f0; display: flex; align-items: center; justify-content: space-between; padding: 0 15px 0 4px; }
.hthumb { width: 665px; height: 11px; background: #c1c1c1; margin-left: 30px; }
.lt, .gt { border: 3px solid transparent; border-left-width: 0; border-right-color: #333; }
.gt { border-left: 3px solid #333; border-right-width: 0; }
.minibar { display: flex; height: 35px; background: linear-gradient(to right, #182114, #1f2620 30%, #24331f 60%, #263620 80%, #262626 92%); color: #eee; font: 10px/15px "Liberation Sans", sans-serif; }
.ministart { width: 32px; display: grid; place-items: center; }
.minisearch { width: 225px; background: #f0f0f0; color: #333; display: flex; align-items: center; gap: 7px; padding-left: 7px; }
.mapp { width: 32px; display: grid; place-items: center; }
.mapp.run { background: linear-gradient(#76b9ed, #76b9ed) center bottom / 26px 2px no-repeat; }
.mapp.active { background: linear-gradient(#76b9ed, #76b9ed) center bottom / 100% 2px no-repeat, #4a5648; }
.minitray { margin-left: auto; display: grid; grid-template-columns: 22px 54px 24px 12px 16px 16px 42px 36px; align-items: center; justify-items: center; }
.miniclock { text-align: center; font-size: 8px; }

.status { display: flex; align-items: center; height: 22px; flex: none; background: #2b579a; color: #fff; font-family: "Open Sans", sans-serif; }
.msgtext { padding-left: 7px; margin-right: auto; }
.status button { width: 38px; height: 22px; }
.status .cur { background: #1e4a88; }
.status .sign { width: 15px; }
.zoom { appearance: none; width: 101px; height: 16px; margin: 0; background: linear-gradient(#fff, #fff) 0 8px / 100% 1px no-repeat, linear-gradient(#fff, #fff) 50px 6px / 1px 5px no-repeat; }
.zoom::-webkit-slider-thumb { appearance: none; width: 4px; height: 10px; background: #fff; }
.pct { width: 47px; padding-left: 11px; }

.taskbar { display: flex; height: 40px; flex: none; background: linear-gradient(to right, #2a281c 0, #1c2a2c 30%, #1d2a2c 55%, #2a303a 72%, #2c271f 82%, #27291d); color: #fff; font-family: "Open Sans", sans-serif; }
.start { width: 48px; }
.searchbox { flex: 0 0 344px; display: flex; align-items: center; gap: 10px; padding-left: 12px; background: #f0f0f0; border: solid #c0c0c0; border-width: 1px 0; }
.searchbox input { flex: 1; border: 0; padding: 0; background: none; outline: 0; font: 14px "Open Sans", sans-serif; }
.searchbox input::placeholder { color: #333; opacity: 1; }
.app { width: 49px; }
.app.run { background: linear-gradient(#76b9ed, #76b9ed) center bottom / 40px 2px no-repeat; }
.app.active { background: linear-gradient(#76b9ed, #76b9ed) center bottom / 100% 2px no-repeat, #46545a; }
.tray { margin-left: auto; display: grid; grid-template-columns: 28px 36px 30px 20px 26px 22px 24px 68px 46px 6px; align-items: center; justify-items: center; }
.temp { font-size: 14px; }
.clock { text-align: center; line-height: 18px; }
.peek { width: 1px; height: 40px; background: #777; }
</style>
